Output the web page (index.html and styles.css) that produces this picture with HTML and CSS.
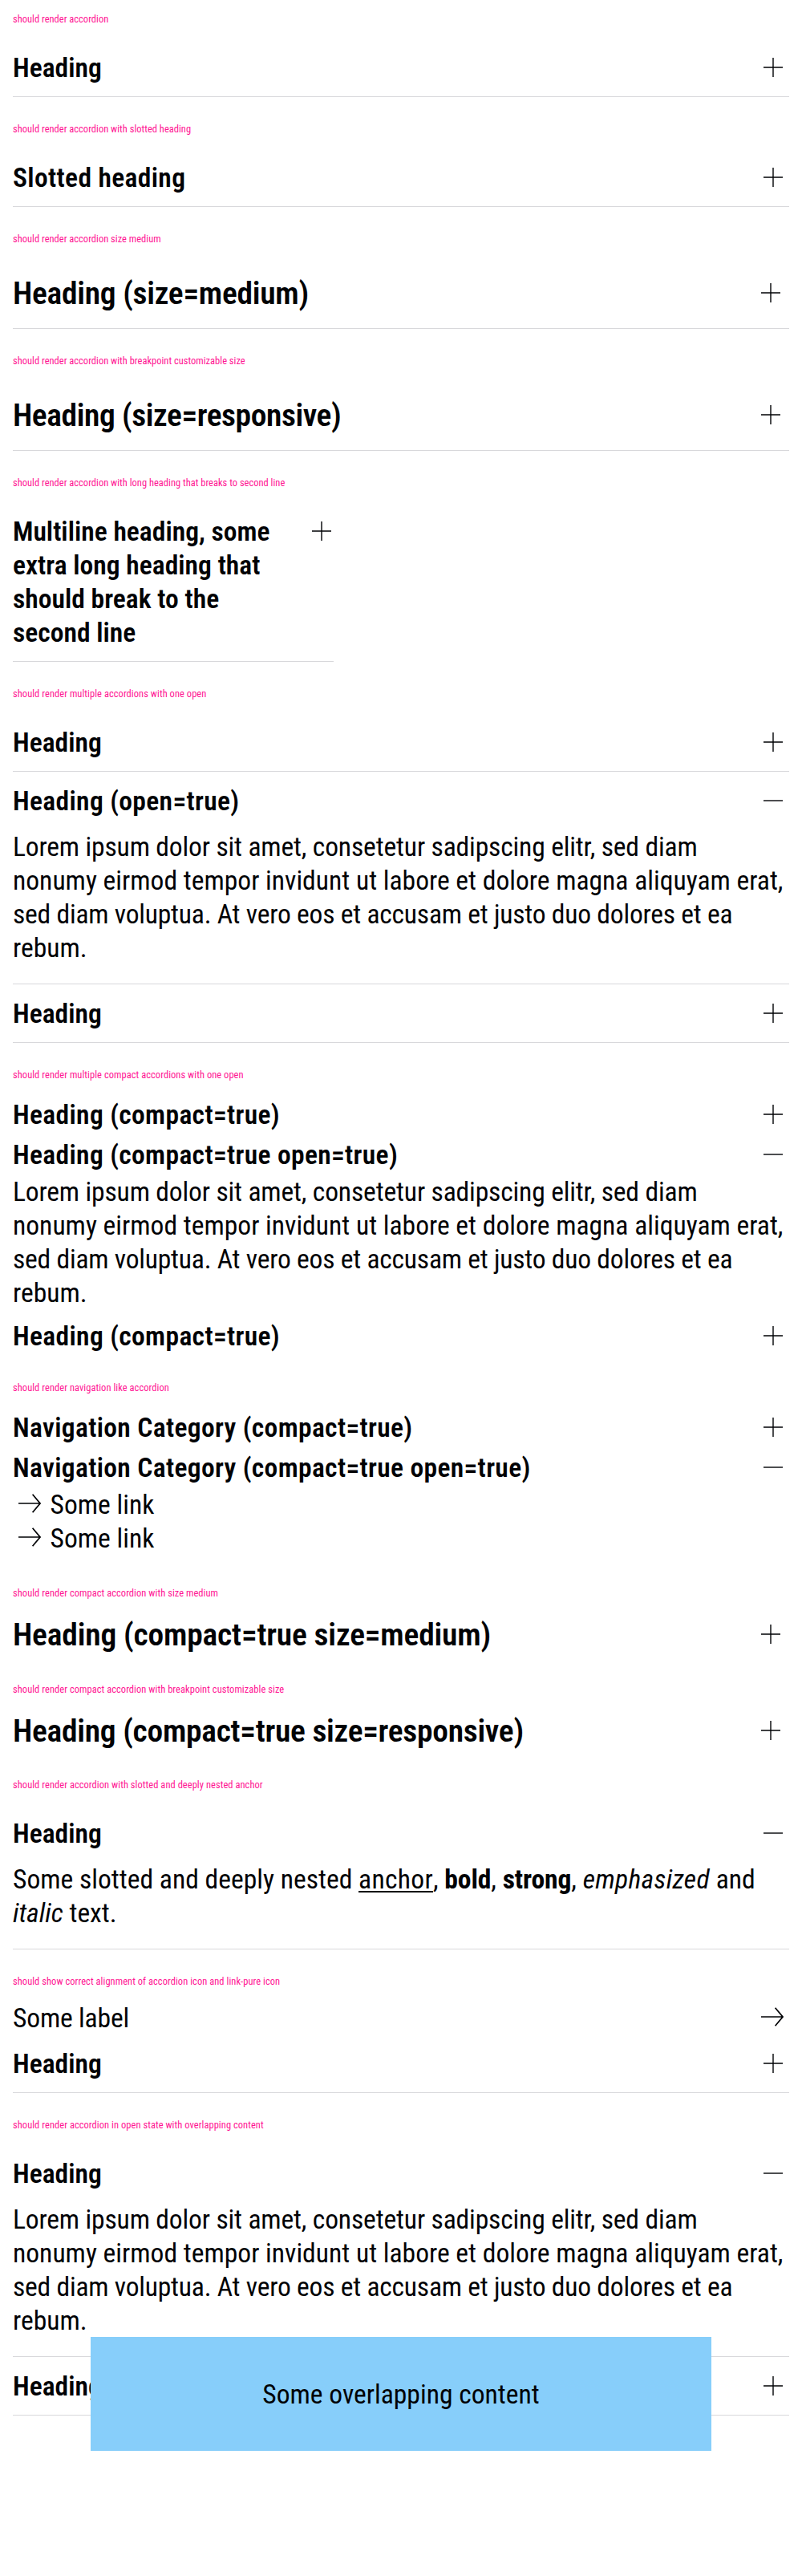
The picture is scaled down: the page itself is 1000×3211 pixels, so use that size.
FILE: index.html
```html
<!DOCTYPE html>
<html lang="en">
<head>
<meta charset="utf-8">
<title>Accordion</title>
<link rel="stylesheet" href="styles.css">
</head>
<body>
<svg class="sprite" aria-hidden="true">
  <symbol id="plus" viewBox="0 0 24 24"><path d="M12 0v24M0 12h24"/></symbol>
  <symbol id="minus" viewBox="0 0 24 24"><path d="M-1 12h25"/></symbol>
  <symbol id="arrow" viewBox="0 0 28 24"><path d="M0 12h27M17.6 .8 27 12 17.6 23.2"/></symbol>
</svg>

<section class="case">
  <p class="label">should render accordion</p>
  <div class="accordion"><h2 class="head"><span>Heading</span><svg class="icon"><use href="#plus"/></svg></h2></div>
</section>

<section class="case">
  <p class="label">should render accordion with slotted heading</p>
  <div class="accordion"><h2 class="head"><span class="loose">Slotted heading</span><svg class="icon"><use href="#plus"/></svg></h2></div>
</section>

<section class="case">
  <p class="label">should render accordion size medium</p>
  <div class="accordion medium"><h2 class="head"><span class="tight">Heading (size=medium)</span><svg class="icon"><use href="#plus"/></svg></h2></div>
</section>

<section class="case">
  <p class="label">should render accordion with breakpoint customizable size</p>
  <div class="accordion medium"><h2 class="head"><span class="tighter">Heading (size=responsive)</span><svg class="icon"><use href="#plus"/></svg></h2></div>
</section>

<section class="case">
  <p class="label">should render accordion with long heading that breaks to second line</p>
  <div class="accordion narrow"><h2 class="head"><span>Multiline heading, some<br>extra long heading that<br>should break to the<br>second line</span><svg class="icon"><use href="#plus"/></svg></h2></div>
</section>

<section class="case">
  <p class="label wide">should render multiple accordions with one open</p>
  <div class="accordion"><h2 class="head"><span>Heading</span><svg class="icon"><use href="#plus"/></svg></h2></div>
  <div class="accordion">
    <h2 class="head"><span class="loose">Heading (open=true)</span><svg class="icon"><use href="#minus"/></svg></h2>
    <p class="content"><span class="line-a">Lorem ipsum dolor sit amet, consetetur sadipscing elitr, sed diam</span><br>nonumy eirmod tempor invidunt ut labore et dolore magna aliquyam erat,<br><span class="line-b">sed diam voluptua. At vero eos et accusam et justo duo dolores et ea</span><br>rebum.</p>
  </div>
  <div class="accordion"><h2 class="head"><span>Heading</span><svg class="icon"><use href="#plus"/></svg></h2></div>
</section>

<section class="case">
  <p class="label wide">should render multiple compact accordions with one open</p>
  <div class="accordion compact"><h2 class="head"><span class="loose">Heading (compact=true)</span><svg class="icon"><use href="#plus"/></svg></h2></div>
  <div class="accordion compact">
    <h2 class="head"><span class="loose">Heading (compact=true open=true)</span><svg class="icon"><use href="#minus"/></svg></h2>
    <p class="content"><span class="line-a">Lorem ipsum dolor sit amet, consetetur sadipscing elitr, sed diam</span><br>nonumy eirmod tempor invidunt ut labore et dolore magna aliquyam erat,<br><span class="line-b">sed diam voluptua. At vero eos et accusam et justo duo dolores et ea</span><br>rebum.</p>
  </div>
  <div class="accordion compact"><h2 class="head"><span class="loose">Heading (compact=true)</span><svg class="icon"><use href="#plus"/></svg></h2></div>
</section>

<section class="case">
  <p class="label wide">should render navigation like accordion</p>
  <div class="accordion compact"><h2 class="head"><span class="loose">Navigation Category (compact=true)</span><svg class="icon"><use href="#plus"/></svg></h2></div>
  <div class="accordion compact">
    <h2 class="head"><span class="loose">Navigation Category (compact=true open=true)</span><svg class="icon"><use href="#minus"/></svg></h2>
    <div class="content">
      <a class="link"><svg class="arrow"><use href="#arrow"/></svg>Some link</a>
      <a class="link"><svg class="arrow"><use href="#arrow"/></svg>Some link</a>
    </div>
  </div>
</section>

<section class="case">
  <p class="label wide">should render compact accordion with size medium</p>
  <div class="accordion compact medium"><h2 class="head"><span class="snug">Heading (compact=true size=medium)</span><svg class="icon"><use href="#plus"/></svg></h2></div>
</section>

<section class="case">
  <p class="label wide">should render compact accordion with breakpoint customizable size</p>
  <div class="accordion compact medium"><h2 class="head"><span class="tight">Heading (compact=true size=responsive)</span><svg class="icon"><use href="#plus"/></svg></h2></div>
</section>

<section class="case">
  <p class="label wide">should render accordion with slotted and deeply nested anchor</p>
  <div class="accordion">
    <h2 class="head"><span>Heading</span><svg class="icon"><use href="#minus"/></svg></h2>
    <p class="content">Some slotted and deeply nested <a class="anchor">anchor</a>, <b>bold</b>, <b>strong</b>, <em class="loose">emphasized</em> and<br><em>italic</em> text.</p>
  </div>
</section>

<section class="case">
  <p class="label wide">should show correct alignment of accordion icon and link-pure icon</p>
  <a class="link stretch"><span class="snug">Some label</span><svg class="arrow"><use href="#arrow"/></svg></a>
  <div class="accordion"><h2 class="head"><span>Heading</span><svg class="icon"><use href="#plus"/></svg></h2></div>
</section>

<section class="case">
  <p class="label wide">should render accordion in open state with overlapping content</p>
  <div class="stage">
    <div class="accordion">
      <h2 class="head"><span>Heading</span><svg class="icon"><use href="#minus"/></svg></h2>
      <p class="content"><span class="line-a">Lorem ipsum dolor sit amet, consetetur sadipscing elitr, sed diam</span><br>nonumy eirmod tempor invidunt ut labore et dolore magna aliquyam erat,<br><span class="line-b">sed diam voluptua. At vero eos et accusam et justo duo dolores et ea</span><br>rebum.</p>
    </div>
    <div class="accordion"><h2 class="head"><span>Heading</span><svg class="icon"><use href="#plus"/></svg></h2></div>
    <div class="overlay">Some overlapping content</div>
  </div>
</section>
</body>
</html>
```
FILE: styles.css
```css
body {
  min-height: 3211px;
  margin: 0;
  padding: 0 16px;
  box-sizing: border-box;
  color: #010205;
  background: #fff;
  font-family: "Roboto Condensed", Roboto, sans-serif;
  font-stretch: condensed;
  font-size: 33.6px;
  font-weight: 400;
  line-height: 42px;
}
.sprite { display: none; }
.case { padding-bottom: 16px; }
.label {
  height: 32px;
  margin: 0;
  padding-top: 16px;
  color: #ff1493;
  font-size: 12.5px;
  line-height: 16px;
}
.wide { letter-spacing: .04px; }
.accordion { border-bottom: 1px solid #d8d8db; }
.narrow { width: 400px; }
.head {
  display: flex;
  justify-content: space-between;
  align-items: flex-start;
  margin: 0;
  padding: 16px 0 14px;
  font-size: 33.6px;
  line-height: 42px;
  font-weight: 600;
}
.medium .head { padding: 19.7px 0; font-size: 39.5px; line-height: 47.6px; }
.compact { border-bottom: 0; }
.compact .head { padding: 5px 0 3px; }
.compact.medium .head { padding: 4px 0; }
.content { margin: 0; padding: 1px 0 23px; white-space: nowrap; }
.compact .content { padding-bottom: 7px; }
.icon {
  flex: none;
  width: 24px;
  height: 24px;
  margin: 8px 8px 0 0;
  overflow: visible;
  fill: none;
  stroke: currentColor;
  stroke-width: 1.4;
}
.narrow .icon { margin-right: 3.5px; }
.medium .icon { margin: 11px 11px 0 0; }
.link { display: flex; align-items: flex-start; }
.arrow {
  flex: none;
  width: 28px;
  height: 24px;
  margin: 7px 11.5px 0 7px;
  overflow: visible;
  fill: none;
  stroke: currentColor;
  stroke-width: 1.7;
}
.stretch { height: 41px; padding-top: 1px; justify-content: space-between; }
.stretch .arrow { margin-right: 7px; }
.anchor { text-decoration: underline 2px; text-underline-offset: 3px; letter-spacing: .3px; }
.content b { letter-spacing: -.1px; }
.loose { letter-spacing: .33px; }
.snug { letter-spacing: -.18px; }
.tight { letter-spacing: -.28px; }
.tighter { letter-spacing: -.43px; }
.line-a { letter-spacing: -.16px; }
.line-b { letter-spacing: -.23px; }
.stage { position: relative; }
.overlay {
  position: absolute;
  left: 10%;
  bottom: -44px;
  width: 80%;
  padding: 51px 0 49px;
  text-align: center;
  background: #87cefa;
}
```
